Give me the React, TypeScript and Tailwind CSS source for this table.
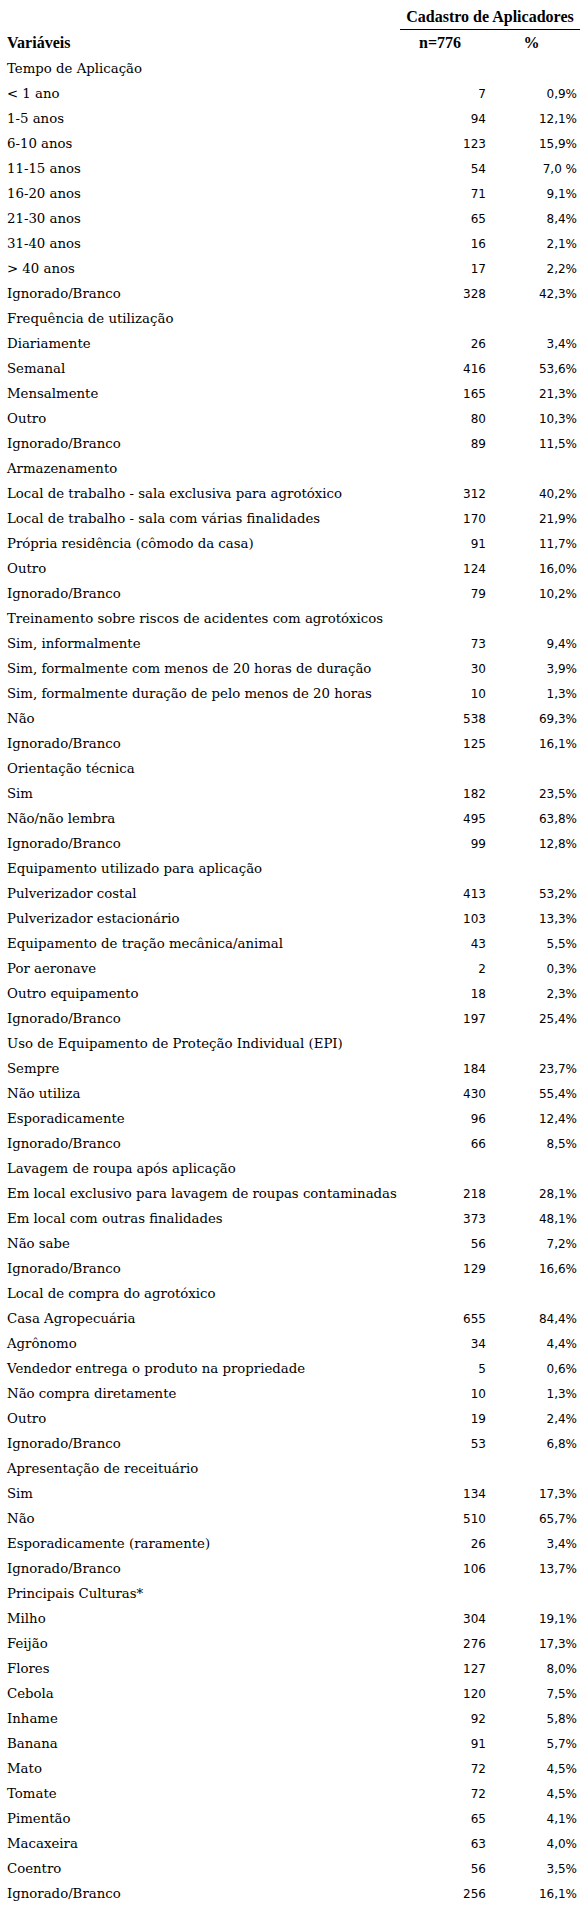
import React from 'react';

type Row = [string, string?, string?];

const groups: { title: string; rows: Row[] }[] = [
  {
    title: 'Tempo de Aplicação',
    rows: [
      ['< 1 ano', '7', '0,9%'],
      ['1-5 anos', '94', '12,1%'],
      ['6-10 anos', '123', '15,9%'],
      ['11-15 anos', '54', '7,0 %'],
      ['16-20 anos', '71', '9,1%'],
      ['21-30 anos', '65', '8,4%'],
      ['31-40 anos', '16', '2,1%'],
      ['> 40 anos', '17', '2,2%'],
      ['Ignorado/Branco', '328', '42,3%'],
    ],
  },
  {
    title: 'Frequência de utilização',
    rows: [
      ['Diariamente', '26', '3,4%'],
      ['Semanal', '416', '53,6%'],
      ['Mensalmente', '165', '21,3%'],
      ['Outro', '80', '10,3%'],
      ['Ignorado/Branco', '89', '11,5%'],
    ],
  },
  {
    title: 'Armazenamento',
    rows: [
      ['Local de trabalho - sala exclusiva para agrotóxico', '312', '40,2%'],
      ['Local de trabalho - sala com várias finalidades', '170', '21,9%'],
      ['Própria residência (cômodo da casa)', '91', '11,7%'],
      ['Outro', '124', '16,0%'],
      ['Ignorado/Branco', '79', '10,2%'],
    ],
  },
  {
    title: 'Treinamento sobre riscos de acidentes com agrotóxicos',
    rows: [
      ['Sim, informalmente', '73', '9,4%'],
      ['Sim, formalmente com menos de 20 horas de duração', '30', '3,9%'],
      ['Sim, formalmente duração de pelo menos de 20 horas', '10', '1,3%'],
      ['Não', '538', '69,3%'],
      ['Ignorado/Branco', '125', '16,1%'],
    ],
  },
  {
    title: 'Orientação técnica',
    rows: [
      ['Sim', '182', '23,5%'],
      ['Não/não lembra', '495', '63,8%'],
      ['Ignorado/Branco', '99', '12,8%'],
    ],
  },
  {
    title: 'Equipamento utilizado para aplicação',
    rows: [
      ['Pulverizador costal', '413', '53,2%'],
      ['Pulverizador estacionário', '103', '13,3%'],
      ['Equipamento de tração mecânica/animal', '43', '5,5%'],
      ['Por aeronave', '2', '0,3%'],
      ['Outro equipamento', '18', '2,3%'],
      ['Ignorado/Branco', '197', '25,4%'],
    ],
  },
  {
    title: 'Uso de Equipamento de Proteção Individual (EPI)',
    rows: [
      ['Sempre', '184', '23,7%'],
      ['Não utiliza', '430', '55,4%'],
      ['Esporadicamente', '96', '12,4%'],
      ['Ignorado/Branco', '66', '8,5%'],
    ],
  },
  {
    title: 'Lavagem de roupa após aplicação',
    rows: [
      ['Em local exclusivo para lavagem de roupas contaminadas', '218', '28,1%'],
      ['Em local com outras finalidades', '373', '48,1%'],
      ['Não sabe', '56', '7,2%'],
      ['Ignorado/Branco', '129', '16,6%'],
    ],
  },
  {
    title: 'Local de compra do agrotóxico',
    rows: [
      ['Casa Agropecuária', '655', '84,4%'],
      ['Agrônomo', '34', '4,4%'],
      ['Vendedor entrega o produto na propriedade', '5', '0,6%'],
      ['Não compra diretamente', '10', '1,3%'],
      ['Outro', '19', '2,4%'],
      ['Ignorado/Branco', '53', '6,8%'],
    ],
  },
  {
    title: 'Apresentação de receituário',
    rows: [
      ['Sim', '134', '17,3%'],
      ['Não', '510', '65,7%'],
      ['Esporadicamente (raramente)', '26', '3,4%'],
      ['Ignorado/Branco', '106', '13,7%'],
    ],
  },
  {
    title: 'Principais Culturas*',
    rows: [
      ['Milho', '304', '19,1%'],
      ['Feijão', '276', '17,3%'],
      ['Flores', '127', '8,0%'],
      ['Cebola', '120', '7,5%'],
      ['Inhame', '92', '5,8%'],
      ['Banana', '91', '5,7%'],
      ['Mato', '72', '4,5%'],
      ['Tomate', '72', '4,5%'],
      ['Pimentão', '65', '4,1%'],
      ['Macaxeira', '63', '4,0%'],
      ['Coentro', '56', '3,5%'],
      ['Ignorado/Branco', '256', '16,1%'],
    ],
  },
];

const grid = 'grid grid-cols-[387px_92px_91px] items-center';
const serif = "font-['DejaVu_Serif',serif] text-[13.3px]";
const nums = "font-['DejaVu_Sans',sans-serif] text-[12px] text-right";
const head = "font-['Liberation_Serif',serif] text-[16px] font-bold";

const DataRow: React.FC<{ row: Row }> = ({ row }) => (
  <div className={`${grid} h-[25px]`}>
    <span className={`${serif} whitespace-nowrap`}>{row[0]}</span>
    <span className={nums}>{row[1]}</span>
    <span className={nums}>{row[2]}</span>
  </div>
);

export default function App() {
  return (
    <div className="w-[584px] min-h-[1909px] bg-white pl-[7px] pt-[4px] text-black">
      {/* Header */}
      <div className={`${grid} h-[26px]`}>
        <span />
        <div className="col-span-2 -mr-[3px] ml-[6px] h-full border-b border-black text-center">
          <span className={`${head} leading-[24px]`}>Cadastro de Aplicadores</span>
        </div>
      </div>
      <div className={`${grid} h-[26px]`}>
        <span className={head}>Variáveis</span>
        <span className={`${head} text-center`}>n=776</span>
        <span className={`${head} text-center`}>%</span>
      </div>

      {groups.map(g => (
        <div key={g.title}>
          <div className="flex h-[25px] items-center">
            <span className={`${serif} whitespace-nowrap`}>{g.title}</span>
          </div>
          {g.rows.map((r, i) => (
            <DataRow key={i} row={r} />
          ))}
        </div>
      ))}
    </div>
  );
}
